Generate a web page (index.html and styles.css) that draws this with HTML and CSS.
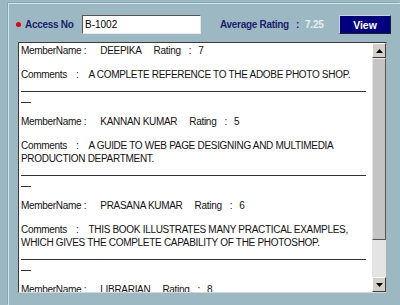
FILE: index.html
```html
<!DOCTYPE html>
<html>
<head>
<meta charset="utf-8">
<link rel="stylesheet" href="styles.css">
</head>
<body>
<div class="panel">
  <div class="header">
    <span class="dot"></span>
    <span class="label access">Access No</span>
    <div class="input">B-1002</div>
    <span class="label avg">Average Rating</span>
    <span class="label colon">:</span>
    <span class="avg-value">7.25</span>
    <button class="view">View</button>
  </div>
  <div class="listbox">
    <div class="content">
      <div class="entry">
        <div class="line"><span class="k-name">MemberName :</span><span class="v-name">DEEPIKA</span><span class="k-rating">Rating</span><span class="r-colon">:</span><span class="r-val">7</span></div>
        <div class="comments"><span class="k-com">Comments</span><span class="c-colon">:</span>A COMPLETE REFERENCE TO THE ADOBE PHOTO SHOP.</div>
        <div class="rule"></div>
        <div class="dash"></div>
      </div>
      <div class="entry">
        <div class="line"><span class="k-name">MemberName :</span><span class="v-name">KANNAN KUMAR</span><span class="k-rating">Rating</span><span class="r-colon">:</span><span class="r-val">5</span></div>
        <div class="comments"><span class="k-com">Comments</span><span class="c-colon">:</span>A GUIDE TO WEB PAGE DESIGNING AND MULTIMEDIA PRODUCTION DEPARTMENT.</div>
        <div class="rule"></div>
        <div class="dash"></div>
      </div>
      <div class="entry">
        <div class="line"><span class="k-name">MemberName :</span><span class="v-name">PRASANA KUMAR</span><span class="k-rating">Rating</span><span class="r-colon">:</span><span class="r-val">6</span></div>
        <div class="comments"><span class="k-com">Comments</span><span class="c-colon">:</span>THIS BOOK ILLUSTRATES MANY PRACTICAL EXAMPLES, WHICH GIVES THE COMPLETE CAPABILITY OF THE PHOTOSHOP.</div>
        <div class="rule"></div>
        <div class="dash"></div>
      </div>
      <div class="entry">
        <div class="line"><span class="k-name">MemberName :</span><span class="v-name">LIBRARIAN</span><span class="k-rating">Rating</span><span class="r-colon">:</span><span class="r-val">8</span></div>
      </div>
    </div>
    <div class="scrollbar">
      <div class="sb-btn"><svg width="7" height="4" viewBox="0 0 7 4"><path d="M3.5 0 L7 4 L0 4 Z" fill="#000"/></svg></div>
      <div class="sb-thumb"></div>
      <div class="sb-track"></div>
      <div class="sb-btn"><svg width="7" height="4" viewBox="0 0 7 4"><path d="M0 0 L7 0 L3.5 4 Z" fill="#000"/></svg></div>
    </div>
  </div>
</div>
</body>
</html>
```

FILE: styles.css
```css
html, body {
  margin: 0;
  padding: 0;
}
body {
  width: 400px;
  height: 305px;
  overflow: hidden;
  background: #9cb9c3;
  font-family: "Liberation Sans", Arial, sans-serif;
}
.panel {
  margin: 3px 0 0 8px;
  height: 302px;
  border-top: 1px solid #d2e2e8;
  border-left: 1px solid #d2e2e8;
  box-shadow: -1px -1px 0 #8aa6b0;
  box-sizing: border-box;
}
.header {
  display: flex;
  align-items: center;
  height: 19px;
  margin-top: 11px;
  padding-left: 7px;
  white-space: nowrap;
}
.header > * {
  flex-shrink: 0;
}
.dot {
  width: 5px;
  height: 5px;
  border-radius: 50%;
  background: #e00000;
  margin-right: 4px;
}
.label {
  font-size: 10px;
  font-weight: bold;
  color: #1c1c70;
  letter-spacing: -0.3px;
}
.access {
  width: 57px;
}
.input {
  width: 115px;
  height: 17px;
  background: #fff;
  border-top: 1px solid #555;
  border-left: 1px solid #555;
  border-right: 1px solid #e8e8e8;
  border-bottom: 1px solid #e8e8e8;
  font-size: 10px;
  line-height: 17px;
  padding-left: 2px;
  box-sizing: content-box;
  color: #000;
}
.avg {
  margin-left: 19px;
  width: 70px;
}
.colon {
  margin-left: 6px;
  width: 4px;
}
.avg-value {
  margin-left: 5px;
  width: 17px;
  font-size: 10px;
  font-weight: bold;
  letter-spacing: -0.2px;
  color: #e6eef0;
}
.view {
  margin-left: 17px;
  width: 52px;
  height: 19px;
  padding: 0;
  background: #000080;
  color: #fff;
  font-family: "Liberation Sans", Arial, sans-serif;
  font-size: 10.5px;
  font-weight: bold;
  border-top: 1px solid #c8d4dc;
  border-left: 1px solid #c8d4dc;
  border-right: 1px solid #202020;
  border-bottom: 1px solid #202020;
}
.listbox {
  margin: 8px 0 0 9px;
  width: 369px;
  height: 251px;
  box-sizing: border-box;
  border: 1px solid #3a3a3a;
  border-right-color: #b0b0b0;
  border-bottom-color: #d0d8dc;
  background: #fff;
  display: flex;
}
.content {
  flex: 1;
  overflow: hidden;
  padding: 1px 6px 0 2px;
  font-size: 10px;
  letter-spacing: -0.3px;
  line-height: 13px;
  color: #111;
}
.entry {
  margin-bottom: 12px;
}
.line {
  white-space: nowrap;
}
.k-name {
  margin-right: 14px;
}
.k-rating {
  margin-left: 12px;
}
.r-colon {
  margin-left: 8px;
}
.r-val {
  margin-left: 7px;
}
.comments {
  margin-top: 11px;
}
.c-colon {
  margin-left: 9px;
  margin-right: 10px;
}
.rule {
  height: 1px;
  background: #333;
  margin-top: 10px;
}
.dash {
  width: 10px;
  height: 1px;
  background: #333;
  margin-top: 10px;
}
.scrollbar {
  width: 14px;
  display: flex;
  flex-direction: column;
  background: #e2e2e2;
}
.sb-btn {
  height: 15px;
  box-sizing: border-box;
  background: #d4d0c8;
  border-top: 1px solid #fff;
  border-left: 1px solid #fff;
  border-right: 1px solid #404040;
  border-bottom: 1px solid #404040;
  display: flex;
  align-items: center;
  justify-content: center;
}
.sb-thumb {
  height: 182px;
  box-sizing: border-box;
  background: #c4c4c4;
  border-top: 1px solid #e8e8e8;
  border-left: 1px solid #e8e8e8;
  border-right: 1px solid #555;
  border-bottom: 1px solid #555;
}
.sb-track {
  flex: 1;
  background: #e4e4e4;
}
```
